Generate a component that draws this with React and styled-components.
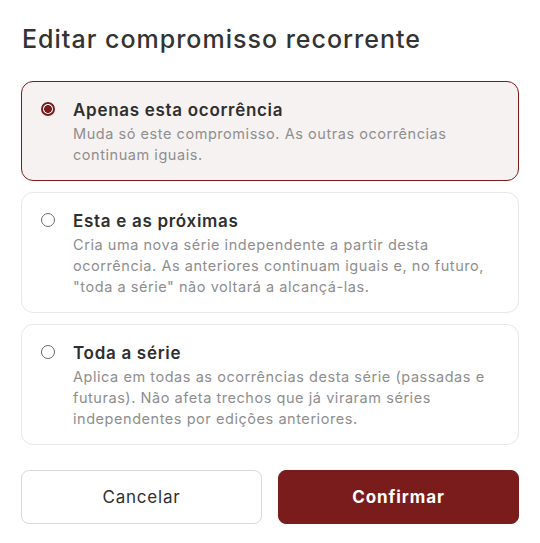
import React, { useState } from "react";
import styled, { createGlobalStyle } from "styled-components";

const GlobalStyle = createGlobalStyle`
  html, body {
    margin: 0;
    padding: 0;
    background: #ffffff;
  }
  * {
    box-sizing: border-box;
  }
`;

const options = [
  {
    id: "this",
    title: "Apenas esta ocorrência",
    description:
      "Muda só este compromisso. As outras ocorrências continuam iguais.",
  },
  {
    id: "following",
    title: "Esta e as próximas",
    description:
      'Cria uma nova série independente a partir desta ocorrência. As anteriores continuam iguais e, no futuro, "toda a série" não voltará a alcançá-las.',
  },
  {
    id: "all",
    title: "Toda a série",
    description:
      "Aplica em todas as ocorrências desta série (passadas e futuras). Não afeta trechos que já viraram séries independentes por edições anteriores.",
  },
];

export default function App() {
  const [selected, setSelected] = useState("this");

  return (
    <Dialog>
      <GlobalStyle />
      <Title>Editar compromisso recorrente</Title>
      <OptionList>
        {options.map((opt) => (
          <Option
            key={opt.id}
            $active={selected === opt.id}
            onClick={() => setSelected(opt.id)}
          >
            <Radio $active={selected === opt.id} />
            <OptionText>
              <OptionTitle>{opt.title}</OptionTitle>
              <OptionDesc>{opt.description}</OptionDesc>
            </OptionText>
          </Option>
        ))}
      </OptionList>
      <Actions>
        <Button>Cancelar</Button>
        <Button $primary>Confirmar</Button>
      </Actions>
    </Dialog>
  );
}

const Dialog = styled.div`
  width: 540px;
  padding: 23px 21px 19px 21px;
  font-family: Inter, "Noto Sans", sans-serif;
  background: #fff;
`;

const Title = styled.h1`
  margin: 0 0 0 1px;
  font-size: 25px;
  line-height: 32px;
  font-weight: 500;
  letter-spacing: 1px;
  color: #333333;
`;

const OptionList = styled.div`
  margin-top: 26px;
  display: flex;
  flex-direction: column;
  gap: 11px;
`;

const Option = styled.div`
  display: flex;
  align-items: flex-start;
  gap: 18px;
  padding: 17px 20px 15px 19px;
  border-radius: 12px;
  border: 1px solid ${(p) => (p.$active ? "#7b1c1c" : "#e8e8ea")};
  background: ${(p) => (p.$active ? "#f6f2f1" : "#ffffff")};
  cursor: pointer;
`;

const Radio = styled.span`
  flex: none;
  width: 14px;
  height: 14px;
  margin-top: 3px;
  border-radius: 50%;
  border: ${(p) => (p.$active ? "2px solid #7b1c1c" : "1px solid #6a6a6a")};
  background: ${(p) =>
    p.$active ? "radial-gradient(circle, #7b1c1c 0 3.6px, #fff 4.1px)" : "#fff"};
  box-shadow: ${(p) => (p.$active ? "0 0 0 1px #f6f2f1" : "none")};
`;

const OptionText = styled.div`
  display: flex;
  flex-direction: column;
  gap: 2px;
`;

const OptionTitle = styled.div`
  font-size: 17px;
  line-height: 22px;
  font-weight: 600;
  letter-spacing: 0.7px;
  color: #2f2f2f;
`;

const OptionDesc = styled.div`
  font-size: 14.5px;
  line-height: 21px;
  letter-spacing: 0.55px;
  color: #8e8e8e;
`;

const Actions = styled.div`
  margin-top: 25px;
  display: grid;
  grid-template-columns: 1fr 1fr;
  gap: 16px;
`;

const Button = styled.button`
  height: 54px;
  border-radius: 8px;
  font-family: inherit;
  font-size: 17px;
  font-weight: ${(p) => (p.$primary ? 700 : 400)};
  letter-spacing: ${(p) => (p.$primary ? "0.9px" : "0.8px")};
  color: ${(p) => (p.$primary ? "#ffffff" : "#2f2f2f")};
  background: ${(p) => (p.$primary ? "#7b1c1c" : "#ffffff")};
  border: 1px solid ${(p) => (p.$primary ? "#7b1c1c" : "#d9d9e0")};
  cursor: pointer;
`;
